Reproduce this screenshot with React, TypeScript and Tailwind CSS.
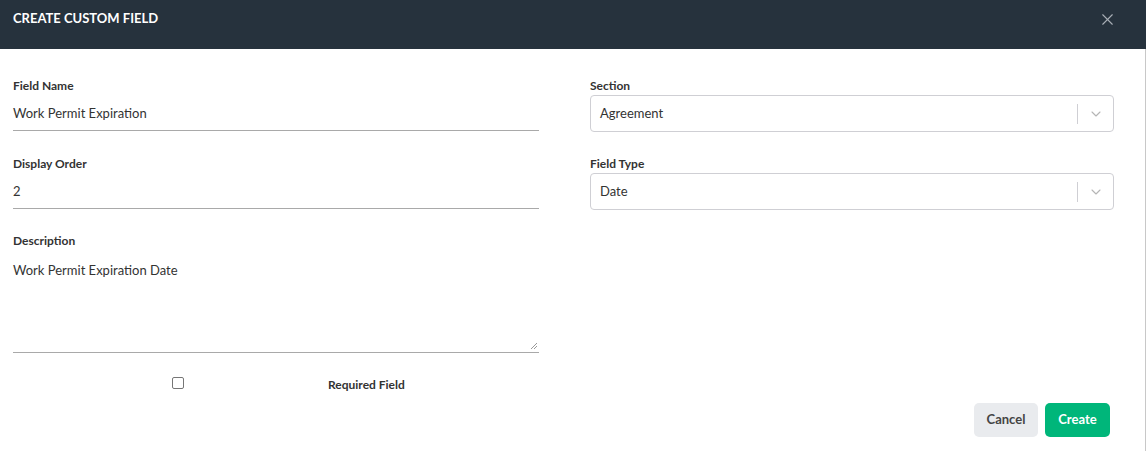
import { ChevronDown, X } from 'lucide-react';

interface TextFieldProps {
    label: string;
    value: string;
}

function UnderlineField({ label, value }: TextFieldProps) {
    return (
        <div className="flex flex-col">
            <p className="text-[12px] font-bold leading-[16px] text-[#333]">{label}</p>
            <div className="mt-[11px] border-b border-[#a9a9a9] pb-[9px] text-[13px] leading-[16px] text-[#333]">{value}</div>
        </div>
    );
}

function SelectField({ label, value }: TextFieldProps) {
    return (
        <div className="flex flex-col">
            <p className="text-[12px] font-bold leading-[16px] text-[#333]">{label}</p>
            <div className="mt-[1px] flex h-[37px] items-center rounded-[4px] border border-[#cfcfd4] pl-[9px]">
                <span className="flex-1 text-[13px] text-[#333]">{value}</span>
                <span className="h-[20px] w-px bg-[#cfcfd4]" />
                <span className="flex w-[35px] justify-center text-[#b5b5b5]">
                    <ChevronDown size={16} strokeWidth={1.6} />
                </span>
            </div>
        </div>
    );
}

export default function App() {
    return (
        <div className="h-[451px] w-[1146px] bg-white" style={{ fontFamily: 'Lato, "Open Sans", sans-serif' }}>
            {/* 标题栏 */}
            <div className="flex h-[49px] items-center justify-between bg-[#26323d] pl-[13px] pr-[29px]">
                <h1 className="-mt-[12px] text-[13px] font-bold text-white">CREATE CUSTOM FIELD</h1>
                <X className="-mt-[10px] text-[#a8afb6]" size={19} strokeWidth={1.4} />
            </div>

            <div className="h-[402px] border-r border-[#c8c8c8] pl-[13px] pr-[31px] pt-[29px]">
                <div className="grid grid-cols-[526px_524px] gap-x-[51px]">
                    <div className="flex flex-col">
                        <UnderlineField label="Field Name" value="Work Permit Expiration" />
                        <div className="mt-[25px]">
                            <UnderlineField label="Display Order" value="2" />
                        </div>
                        <div className="mt-[24px] flex flex-col">
                            <p className="text-[12px] font-bold leading-[16px] text-[#333]">Description</p>
                            <div className="relative mt-[13px] h-[91px] border-b border-[#a9a9a9] text-[13px] leading-[16px] text-[#333]">
                                Work Permit Expiration Date
                                <svg className="absolute bottom-[2px] right-[1px]" width="8" height="8" viewBox="0 0 8 8">
                                    <path d="M7 1L1 7M7 4L4 7" stroke="#999" strokeWidth="1" />
                                </svg>
                            </div>
                        </div>
                        <div className="mt-[19px] flex items-center">
                            <div className="flex w-[330px] justify-center">
                                <span className="h-[12px] w-[12px] rounded-[2px] border border-[#767676] bg-white" />
                            </div>
                            <span className="-ml-[15px] mt-[4px] text-[12px] font-bold text-[#333]">Required Field</span>
                        </div>
                    </div>
                    <div className="flex flex-col gap-[24px]">
                        <SelectField label="Section" value="Agreement" />
                        <SelectField label="Field Type" value="Date" />
                    </div>
                </div>

                <div className="mt-[9px] flex justify-end gap-[7px] pr-[4px]">
                    <button className="h-[34px] w-[64px] rounded-[5px] bg-[#e9ebee] text-[13px] font-bold text-[#444]">Cancel</button>
                    <button className="h-[34px] w-[65px] rounded-[5px] bg-[#00b67a] text-[13px] font-bold text-white">Create</button>
                </div>
            </div>
        </div>
    );
}
